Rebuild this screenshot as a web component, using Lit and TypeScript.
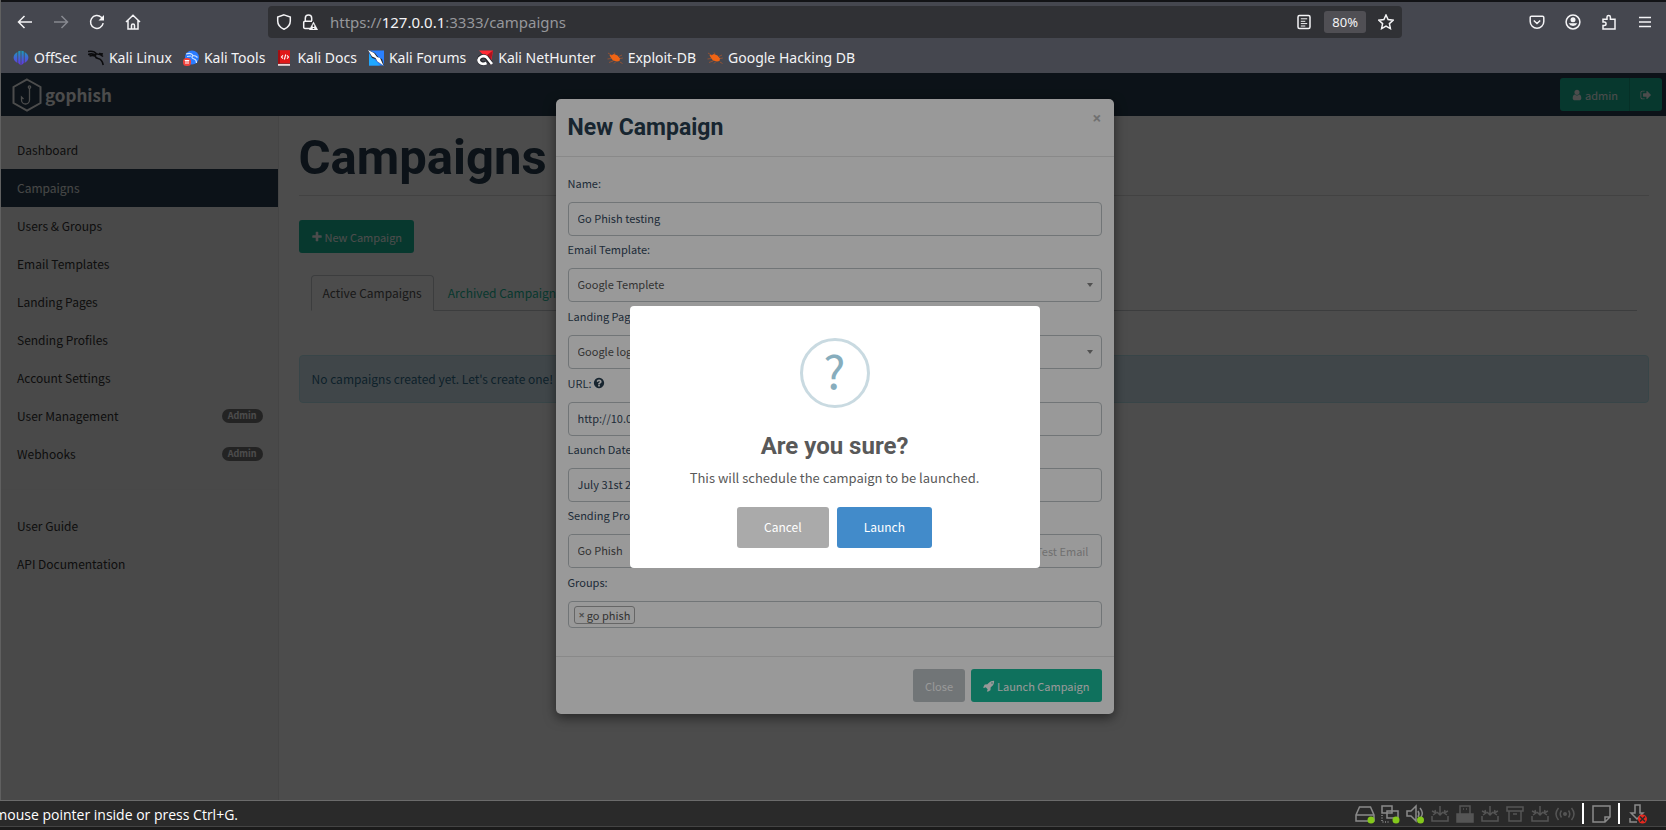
import { LitElement, html, svg, css, TemplateResult } from "lit";
import { customElement, property } from "lit/decorators.js";

const FA: Record<string, string> = {
  plus: "M1600 736v192q0 40-28 68t-68 28h-416v416q0 40-28 68t-68 28h-192q-40 0-68-28t-28-68v-416h-416q-40 0-68-28t-28-68v-192q0-40 28-68t68-28h416v-416q0-40 28-68t68-28h192q40 0 68 28t28 68v416h416q40 0 68 28t28 68z",
  user: "M1536 1399q0 109-62.5 187t-150.5 78h-854q-88 0-150.5-78t-62.5-187q0-85 8.5-160.5t31.5-152 58.5-131 94-89 134.5-34.5q131 128 313 128t313-128q76 0 134.5 34.5t94 89 58.5 131 31.5 152 8.5 160.5zm-256-887q0 159-112.5 271.5t-271.5 112.5-271.5-112.5-112.5-271.5 112.5-271.5 271.5-112.5 271.5 112.5 112.5 271.5z",
  signout: "M704 1440q0 4 1 20t.5 26.5-3 23.5-10 19.5-20.5 6.5h-320q-119 0-203.5-84.5t-84.5-203.5v-704q0-119 84.5-203.5t203.5-84.5h320q13 0 22.5 9.5t9.5 22.5q0 4 1 20t.5 26.5-3 23.5-10 19.5-20.5 6.5h-320q-66 0-113 47t-47 113v704q0 66 47 113t113 47h312l11.5 1 11.5 3 8 5.5 7 9 2 13.5zm928-544q0 26-19 45l-544 544q-19 19-45 19t-45-19-19-45v-288h-448q-26 0-45-19t-19-45v-384q0-26 19-45t45-19h448v-288q0-26 19-45t45-19 45 19l544 544q19 19 19 45z",
  question: "M1024 1376v-192q0-14-9-23t-23-9h-192q-14 0-23 9t-9 23v192q0 14 9 23t23 9h192q14 0 23-9t9-23zm256-672q0-88-55.5-163t-138.5-116-170-41q-243 0-371 213-15 24 8 42l132 100q7 6 19 6 16 0 25-12 53-68 86-92 34-24 86-24 48 0 85.5 26t37.5 59q0 38-20 61t-68 45q-63 28-115.5 86.5t-52.5 125.5v36q0 14 9 23t23 9h192q14 0 23-9t9-23q0-19 21.5-49.5t54.5-49.5q32-18 49-28.5t46-35 44.5-48 28-60.5 12.5-81zm384 192q0 209-103 385.5t-279.5 279.5-385.5 103-385.5-103-279.5-279.5-103-385.5 103-385.5 279.5-279.5 385.5-103 385.5 103 279.5 279.5 103 385.5z",
  rocket: "M1440 448q0-40-28-68t-68-28-68 28-28 68 28 68 68 28 68-28 28-68zm224-288q0 249-75.5 430.5t-253.5 360.5q-81 80-195 176l-20 379q-2 16-16 26l-384 224q-7 4-16 4-12 0-23-9l-64-64q-13-14-8-32l85-276-281-281-276 85q-3 1-9 1-14 0-23-9l-64-64q-17-19-5-39l224-384q10-14 26-16l379-20q96-114 176-195 188-187 358-258t431-71q14 0 24 9.5t10 22.5z",
};

const fa = (name: string) =>
  html`<svg class="fa" viewBox="0 0 1792 1792" aria-hidden="true"><path d=${FA[name]} /></svg>`;

/* Outline icon on a 16-unit grid */
const line = (body: TemplateResult | unknown) =>
  html`<svg class="line" viewBox="0 0 16 16" aria-hidden="true">${body}</svg>`;

const ICONS = {
  back: svg`<path d="M15 8H1.5M7.5 2 1.5 8l6 6"/>`,
  forward: svg`<path d="M1 8h13.500M8.500 2l6 6-6 6"/>`,
  reload: svg`<path d="M14.200 9.200A6.400 6.400 0 1 1 12.300 3.300L14 5"/><path class="solid" d="M15 1v5.500H9.500z"/>`,
  home: svg`<path d="M1 8 8 1.200 15 8M3 6.500V15h10V6.500M6.500 15v-3.500a1.500 1.500 0 0 1 3 0V15"/>`,
  shield: svg`<path d="M8 .9 14.300 3v4c0 4-2.500 6.600-6.300 8.300C4.200 13.600 1.700 11 1.700 7V3z"/>`,
  lock: svg`<path d="M8 14.500H3A1.300 1.300 0 0 1 1.700 13V8.500A1.300 1.300 0 0 1 3 7.200h7M3.300 7V4.200a3.200 3.200 0 0 1 6.400 0V7"/><path class="solid" d="M11.500 7.500 16 16H7z"/><path class="cut" d="M11.500 10.500v2.500M11.500 14v1"/>`,
  reader: svg`<rect x="2" y="1.500" width="12" height="13" rx="1.500"/><path d="M4.800 4.800h6.400M4.800 7.300h4.500M4.800 9.600h6.400M4.800 12h4.500" stroke-width="1"/>`,
  star: svg`<path d="m8 1 2.100 4.600 5 .6-3.700 3.400 1 5L8 12.100l-4.400 2.500 1-5L.9 6.200l5-.6z"/>`,
  pocket: svg`<path d="M2.500 2.200h11A1.300 1.300 0 0 1 14.800 3.500V7.500a6.800 6.800 0 0 1-13.600 0v-4A1.300 1.300 0 0 1 2.500 2.200zM4.800 6.500 8 9.500l3.200-3"/>`,
  account: svg`<circle cx="8" cy="8" r="6.900"/><circle class="solid" cx="8" cy="5.800" r="2.500"/><path class="solid" d="M3.700 9.300h8.600a4.600 4 0 0 1-8.600 0z"/>`,
  puzzle: svg`<path d="M2 15V11.500h1.300a1.600 1.600 0 0 0 0-3.500H2V5.200h4V3.100a1.700 1.700 0 0 1 3.400 0v2.100H14V15z"/>`,
  menu: svg`<path d="M2 3.500h12M2 8h12M2 12.500h12"/>`,
};

interface Bookmark { label: string; icon: TemplateResult; }

const fav = (body: unknown) => html`<svg class="fav" viewBox="0 0 16 16" aria-hidden="true">${body}</svg>`;
const bug = fav(svg`<path fill="#f06414" d="M2.500 5 5 5l2-1 3.500 1.500 2.500 3-.5 2.500-2.500.5-4-1L4 8z"/><path stroke="#b5572a" stroke-width=".7" fill="none" d="M1 3 5 5.500M.5 9l4-.5M2 12.500l4-1.500M7 13.500l2-2M13 12l2.500 1.500M12 6.500l3-1.500M8 4l-1-1.500M13 8.500l2.800-.5"/>`);

const BOOKMARKS: Bookmark[] = [
  { label: "OffSec", icon: fav(svg`<defs><linearGradient id="g" x2="0" y2="16" gradientUnits="userSpaceOnUse"><stop offset="0" stop-color="#16a4b4"/><stop offset=".4" stop-color="#3a6fd0"/><stop offset="1" stop-color="#6a2de8"/></linearGradient></defs><path fill="url(#g)" d="M7.600 .8v14.400L5.200 13V1.300zM8.400 .8v14.400L10.800 13V1.300zM4.400 2v11C1.800 11.500 .6 9.700.6 7.500S1.800 3.500 4.400 2zM11.600 2v11c2.600-1.500 3.800-3.300 3.800-5.500S14.200 3.500 11.600 2z"/>`) },
  { label: "Kali Linux", icon: fav(svg`<path fill="none" stroke="#0b0b0d" stroke-width="1.600" d="M0 1.500c4-.8 7 .2 8.500 2.500 3.500-.3 5 1 6.500 2.500M0 4.500c3-1 6-.5 8 1.200M8.500 3.500c-2 2-1.500 4.500 1.500 5s4.500 2.500 5.200 6.500M1.500 6c2-.8 4-.6 5.500 0M11 3.500l4 .5"/>`) },
  { label: "Kali Tools", icon: fav(svg`<circle cx="9" cy="7.500" r="7" fill="#2a7cff"/><path fill="none" stroke="#cfe4ff" stroke-width="1.200" d="M3 4c4-1.500 6-.5 7 1.500 2 0 3.500.8 4.500 2M10 5.500c-2 1.500-1 3 1 3.500s2.500 2 2.500 4M4 6.500l4-.5"/><rect y="8" width="8" height="8" rx="3.500" fill="#f0423c"/><path stroke="#fff" stroke-width="1" fill="none" d="M1.800 10.500h4.400M3 10.500v3.500M5 10.500v3.500"/>`) },
  { label: "Kali Docs", icon: fav(svg`<path fill="#e01818" d="M2 .2h12v13.300H2z"/><path fill="#a30f12" d="M2 .2h2v13.300H2z"/><path fill="#e9d8d8" d="M2 14h12v1.800H2z"/><path stroke="#fff" stroke-width="1.100" fill="none" d="M7 5.300 5.500 7 7 8.700M11 5.300 12.500 7 11 8.700M9.700 4.500l-1.300 5"/>`) },
  { label: "Kali Forums", icon: fav(svg`<path fill="#2a80ff" d="M1 .5h15v15H1z"/><path fill="#1fa8ff" d="M1 4l11 11.500H1z"/><path fill="#25262c" d="M0 0l7 3 3.500 4.500L14 9l2 6.500-6-3.500-2.500-3L4 8z"/><path fill="#fff" d="m0 0 6 3 3 4 3 1 3.500 7.500-6-4-2-3.500L4 6.500z"/>`) },
  { label: "Kali NetHunter", icon: fav(svg`<path fill="#ff2b35" d="M2 .5h14L14 13z"/><path fill="#b1121e" d="m10 5 6-4.500L13 15z"/><path fill="none" stroke="#25262c" stroke-width="4.500" d="M14 13 9.500 7.500C6 5 2.500 7 2 10c.5 3 4 4.500 7 2.500"/><path fill="none" stroke="#fff" stroke-width="2.600" d="M15 14 9.500 7C6 5 2 7 1.500 10c.5 3.500 4.500 5 8 3"/>`) },
  { label: "Exploit-DB", icon: bug },
  { label: "Google Hacking DB", icon: bug },
];

const st = (body: unknown) => html`<svg class="st" viewBox="0 0 20 20" aria-hidden="true">${body}</svg>`;
const tray = st(svg`<path stroke="#555" d="M2 12v5h16v-5M10 2v9M7 8l3 3 3-3M2 7l4 2M3 11l3-2-1-3M18 7l-4 2M17 11l-3-2 1-3"/>`);
const STATUS = [
  st(svg`<path stroke="#8a8a8a" d="M4.500 3h11L19 11v6H1v-6zM1 11h18"/><circle class="ok" cx="16" cy="16" r="3.500"/>`),
  st(svg`<path stroke="#8a8a8a" d="M2 2h10v7H2zM7 7h11v7H7z"/><path stroke="#8a8a8a" stroke-dasharray="1 1.500" d="M2 11v7h8"/><circle class="ok" cx="16" cy="16" r="3.500"/>`),
  st(svg`<path stroke="#8a8a8a" d="M2 7h4l5-5v15l-5-5H2zM13 7q2 3 0 6M15 4q4 5 1 9"/><circle class="ok" cx="15.500" cy="16" r="3.500"/>`),
  tray,
  st(svg`<path fill="#555" stroke="#555" d="M2 10h16v8H2z"/><path stroke="#555" d="M5 10V2h10v8M8 5h1M11 5h1"/>`),
  tray,
  st(svg`<path stroke="#555" d="M2 3h16v4H2zM4 7v10h12V7M8 10h4"/>`),
  tray,
  st(svg`<circle cx="10" cy="10" r="2" fill="#555"/><path stroke="#555" d="M6.500 6.500q-2.500 3.500 0 7M13.500 6.500q2.500 3.500 0 7M3.500 4q-5 6 0 12M16.500 4q5 6 0 12"/>`),
];

const shared = css`
  * { box-sizing: border-box; }
  button, input, select { font: inherit; margin: 0; }
  a { text-decoration: none; color: inherit; }
  .fa { width: 12px; height: 12px; fill: currentColor; flex: none; }
`;

@customElement("browser-chrome")
export class BrowserChrome extends LitElement {
  static styles = [shared, css`
    :host { display: block; background: #45474f; border-top: 2px solid #121316; font-family: "Noto Sans", sans-serif; color: #f4f4f6; }
    .line { width: 16px; height: 16px; fill: none; stroke: currentColor; stroke-width: 1.5; flex: none; display: block; }
    .solid { fill: currentColor; stroke: none; }
    .cut { stroke: #303135; }
    .toolbar { display: flex; align-items: center; height: 40px; }
    .side { flex: 0 0 267px; display: flex; align-items: center; gap: 20px; padding-left: 16px; }
    .side.end { flex-basis: 264px; justify-content: flex-end; padding: 0 13px 0 0; }
    button { background: none; border: 0; padding: 0; color: inherit; }
    .dim { color: #878990; }
    .address { flex: 1; display: flex; align-items: center; height: 32px; border-radius: 4px; background: #303135; padding: 0 8px; gap: 10px; }
    .url { flex: 1; font-size: 15px; line-height: 20px; color: #96979b; padding-left: 2px; }
    .url b { font-weight: 400; color: #f4f4f6; }
    .zoom { background: #504f54; border-radius: 3px; font-size: 13px; line-height: 22px; padding: 0 8px; margin: 0 2px; }
    .bookmarks { display: flex; height: 31px; padding: 0 12px; gap: 11px; }
    .bookmarks a { display: flex; align-items: center; gap: 5px; font-size: 14px; line-height: 20px; }
    .fav { width: 16px; height: 16px; flex: none; }
  `];

  render() {
    return html`
      <div class="toolbar">
        <div class="side">
          <button aria-label="Back">${line(ICONS.back)}</button>
          <button class="dim" aria-label="Forward">${line(ICONS.forward)}</button>
          <button aria-label="Reload">${line(ICONS.reload)}</button>
          <button aria-label="Home">${line(ICONS.home)}</button>
        </div>
        <div class="address">
          ${line(ICONS.shield)}${line(ICONS.lock)}
          <span class="url">https://<b>127.0.0.1</b>:3333/campaigns</span>
          <button aria-label="Reader view">${line(ICONS.reader)}</button>
          <button class="zoom">80%</button>
          <button aria-label="Bookmark">${line(ICONS.star)}</button>
        </div>
        <div class="side end">
          <button aria-label="Pocket">${line(ICONS.pocket)}</button>
          <button aria-label="Account">${line(ICONS.account)}</button>
          <button aria-label="Extensions">${line(ICONS.puzzle)}</button>
          <button aria-label="Menu">${line(ICONS.menu)}</button>
        </div>
      </div>
      <nav class="bookmarks">
        ${BOOKMARKS.map((b) => html`<a href="#">${b.icon}<span>${b.label}</span></a>`)}
      </nav>`;
  }
}

@customElement("campaign-form")
export class CampaignForm extends LitElement {
  static styles = [shared, css`
    :host { display: block; width: 558px; margin-top: 26px; background: #fff; border-radius: 5px; box-shadow: 0 4px 12px rgba(0, 0, 0, .5); color: #34495e; font-size: 11px; line-height: 16px; }
    header { display: flex; justify-content: space-between; align-items: flex-start; padding: 12px; height: 58px; border-bottom: 1px solid #e5e5e5; }
    h4 { margin: 0; font: 700 23px/34px Roboto, sans-serif; color: #283f50; }
    .x { border: 0; background: none; padding: 0; font: 700 16px/14px "Noto Sans", sans-serif; color: #bbb; }
    .body { padding: 18px 12px 28px; }
    .row { margin-bottom: 5px; }
    .row.pick { margin-bottom: 6px; }
    .cols { display: grid; grid-template-columns: 1fr 1fr; column-gap: 12px; }
    label { display: flex; align-items: center; gap: 2px; height: 16px; margin-bottom: 11px; }
    label .fa { color: #283f50; }
    input, select { display: block; width: 100%; height: 34px; border: 1px solid #bdc3c7; border-radius: 4px; background: #fff; color: #34495e; padding: 0 9px 2px; }
    select { appearance: none; color: #555; }
    .select { display: grid; align-items: center; }
    .select > * { grid-area: 1 / 1; }
    .caret { justify-self: end; margin-right: 9px; border: 3px solid transparent; border-top: 4px solid #888; border-bottom: 0; pointer-events: none; }
    .group { display: flex; border: 1px solid #bdc3c7; border-radius: 4px; height: 34px; }
    .group select { border: 0; height: 32px; }
    .group button { border: 0; border-left: 1px solid #bdc3c7; background: none; color: #bbb; padding: 0 12px; white-space: nowrap; border-radius: 0; }
    .tags { display: flex; align-items: center; height: 27px; border: 1px solid #bdc3c7; border-radius: 4px; padding: 0 5px; }
    .tag { display: flex; align-items: center; gap: 2px; height: 18px; border: 1px solid #aaa; border-radius: 3px; padding: 0 4px; color: #555; }
    .tag button { border: 0; background: none; padding: 0; font: 700 11px/16px "Noto Sans", sans-serif; color: #888; }
    .tags input { flex: 1; min-width: 0; border: 0; height: 20px; background: none; }
    footer { display: flex; justify-content: flex-end; gap: 6px; padding: 12px; border-top: 1px solid #e5e5e5; }
    footer button { display: flex; align-items: center; gap: 2px; height: 33px; border: 0; border-radius: 3px; padding: 0 12px; color: #fff; background: #bdc3c7; }
    footer .go { background: #1abc9c; }
  `];

  private select(id: string, value: string) {
    return html`<div class="select"><select id=${id}><option>${value}</option></select><i class="caret"></i></div>`;
  }

  render() {
    return html`
      <header><h4>New Campaign</h4><button class="x" aria-label="Close dialog">×</button></header>
      <div class="body">
        <div class="row"><label for="name">Name:</label><input id="name" .value=${"Go Phish testing"} /></div>
        <div class="row pick"><label for="template">Email Template:</label>${this.select("template", "Google Templete")}</div>
        <div class="row pick"><label for="page">Landing Page:</label>${this.select("page", "Google login")}</div>
        <div class="row"><label for="url">URL: ${fa("question")}</label><input id="url" .value=${"http://10.0.2.15"} /></div>
        <div class="row cols">
          <div><label for="launch">Launch Date</label><input id="launch" .value=${"July 31st 2025"} /></div>
          <div><label for="by">Send Emails By</label><input id="by" /></div>
        </div>
        <div class="row pick"><label for="profile">Sending Profile:</label>
          <div class="group"><select id="profile"><option>Go Phish</option></select><button disabled>Send Test Email</button></div></div>
        <label for="groups">Groups:</label>
        <div class="tags"><span class="tag"><button aria-label="Remove go phish">×</button>go phish</span><input id="groups" /></div>
      </div>
      <footer><button>Close</button><button class="go">${fa("rocket")} Launch Campaign</button></footer>`;
  }
}

@customElement("confirm-box")
export class ConfirmBox extends LitElement {
  static styles = [shared, css`
    :host { display: flex; flex-direction: column; align-items: center; width: 410px; padding: 32px 16px 20px; background: #fff; border-radius: 4px; color: #595959; }
    .mark { display: flex; align-items: flex-start; justify-content: center; width: 70px; height: 70px; border: 3px solid #c9dae1; border-radius: 50%; color: #87adbd; font-size: 46px; line-height: 56px; }
    h2 { margin: 21px 0 0; font: 700 24px/34px Roboto, sans-serif; }
    p { margin: 5px 0 0; font-size: 13px; line-height: 20px; }
    .actions { display: flex; gap: 8px; margin-top: 19px; }
    button { height: 41px; border: 0; border-radius: 3px; padding: 0 27px; font-size: 12px; line-height: 20px; color: #fff; background: #aaa; }
    button.go { background: #428bca; }
  `];
  render() {
    return html`<div class="mark">?</div><h2>Are you sure?</h2>
      <p>This will schedule the campaign to be launched.</p>
      <div class="actions"><button>Cancel</button><button class="go">Launch</button></div>`;
  }
}

@customElement("status-bar")
export class StatusBar extends LitElement {
  static styles = css`
    :host { display: flex; justify-content: space-between; height: 30px; background: #2a2a2a; border-top: 1px solid #6b6b6b; border-bottom: 3px solid #1b1b1b; font: 14px/27px "Open Sans", sans-serif; color: #fff; }
    .hint { display: flex; justify-content: flex-end; width: 238px; overflow: hidden; white-space: nowrap; border-bottom: 1px solid #444; }
    .tray { display: flex; align-items: center; gap: 5px; padding-right: 19px; border-bottom: 1px solid #444; flex: 1; justify-content: flex-end; }
    .st { width: 20px; height: 20px; fill: none; stroke-width: 1.5; display: block; }
    .ok { fill: #84c81c; stroke: none; }
    .bar { width: 2px; height: 21px; background: #fff; margin: 0 2px; }
  `;
  render() {
    return html`<div class="hint">mouse pointer inside or press Ctrl+G.</div>
      <div class="tray">${STATUS}<i class="bar"></i>
        ${st(svg`<path stroke="#8a8a8a" d="M2 2h17v11l-5 5H2zM19 13h-5v5"/>`)}<i class="bar"></i>
        ${st(svg`<path stroke="#8a8a8a" d="M3 14v4h7M8 1h5v8h3l-6 6-6-6h4z"/><circle cx="15.500" cy="15" r="4.500" fill="#e8281e"/><path stroke="#2a2a2a" d="m13 12.500 5 5M18 12.500l-5 5"/>`)}
      </div>`;
  }
}

@customElement("app-root")
export class AppRoot extends LitElement {
  static styles = [shared, css`
    :host { display: flex; flex-direction: column; height: 100vh; overflow: hidden; }
    .window { flex: 1; min-height: 0; display: flex; flex-direction: column; border-left: 1px solid #606060; background: #45474f; }
    .page { position: relative; flex: 1; min-height: 0; display: flex; flex-direction: column; background: #fff; font: 12px/18px "Noto Sans CJK JP", sans-serif; color: #34495e; overflow: hidden; }
    .navbar { display: flex; align-items: center; justify-content: space-between; height: 43px; background: #283f50; color: #fff; padding: 0 4px 0 11px; }
    .brand { display: flex; align-items: center; gap: 3px; font-weight: 700; font-size: 17px; line-height: 24px; }
    .hex { width: 30px; height: 34px; fill: none; stroke: #fff; stroke-width: 2; }
    .hex .hook { stroke-width: 1.3; }
    .account { display: flex; }
    .account button { display: flex; align-items: center; gap: 2px; height: 33px; border: 0; background: #1abc9c; color: #fff; padding: 0 11px; font-size: 11px; }
    .account button:first-child { border-radius: 3px 0 0 3px; border-right: 1px solid #16a085; }
    .account button:last-child { border-radius: 0 3px 3px 0; padding: 0 10px; }
    .columns { flex: 1; display: grid; grid-template-columns: 1fr 5fr; }
    .sidebar { background: #f5f5f5; border-right: 1px solid #e7e7e7; padding-top: 15px; }
    .sidebar a { display: flex; align-items: center; justify-content: space-between; height: 38px; padding: 0 15px 0 16px; color: #333; }
    .sidebar a.active { background: #283f50; color: #eee; }
    .badge { background: #777; color: #fff; border-radius: 7px; font-size: 9px; font-weight: 700; line-height: 14px; padding: 0 6px; }
    .rule { height: 1px; background: #f0f0f0; margin: 16px 0 17px; }
    .main { padding: 10px 17px 0 20px; }
    h1 { margin: 0 0 24px; padding-bottom: 6px; border-bottom: 1px solid #dedede; font: 700 49px/63px Roboto, sans-serif; color: #283f50; }
    .new { display: flex; align-items: center; gap: 2px; height: 33px; border: 0; border-radius: 3px; background: #1abc9c; color: #fff; padding: 0 12px; font-size: 11px; }
    .tabs { display: flex; margin: 22px 12px 44px; border-bottom: 1px solid #c8cdd0; gap: 2px; }
    .tabs a { height: 35px; line-height: 34px; padding: 0 11px; color: #1abc9c; border: 1px solid transparent; }
    .tabs a.on { color: #555; background: #fff; border-color: #c8cdd0; border-bottom-color: #fff; border-radius: 4px 4px 0 0; margin-bottom: -1px; height: 36px; }
    .alert { border: 1px solid #bce8f1; border-radius: 4px; background: #d9edf7; color: #31708f; padding: 14px 12px; }
    .shade { position: absolute; inset: 0; display: flex; justify-content: center; align-items: flex-start; padding-left: 2px; background: rgba(0, 0, 0, .5); }
    .shade.top { align-items: center; background: rgba(0, 0, 0, .4); }
  `];

  @property({ type: Array }) items = ["Dashboard", "Campaigns", "Users & Groups", "Email Templates", "Landing Pages", "Sending Profiles", "Account Settings", "User Management", "Webhooks"];

  render() {
    return html`
      <div class="window">
        <browser-chrome></browser-chrome>
        <div class="page">
          <div class="navbar">
            <a class="brand" href="#">
              <svg class="hex" viewBox="0 0 30 34" aria-hidden="true"><path d="M15 1.500 28.500 9v16L15 32.500 1.500 25V9z"/><path class="hook" d="M17.500 10v12a4 4 0 0 1-8 0v-3l2 2"/><circle class="hook" cx="17.500" cy="9" r="1.200"/></svg>
              gophish</a>
            <div class="account"><button>${fa("user")} admin</button><button aria-label="Sign out">${fa("signout")}</button></div>
          </div>
          <div class="columns">
            <nav class="sidebar">
              ${this.items.map((t, i) => html`<a href="#" class=${t === "Campaigns" ? "active" : ""}>${t}${i > 6 ? html`<span class="badge">Admin</span>` : ""}</a>`)}
              <div class="rule"></div>
              <a href="#">User Guide</a><a href="#">API Documentation</a>
            </nav>
            <main class="main">
              <h1>Campaigns</h1>
              <button class="new">${fa("plus")} New Campaign</button>
              <div class="tabs"><a class="on" href="#">Active Campaigns</a><a href="#">Archived Campaigns</a></div>
              <div class="alert">No campaigns created yet. Let's create one!</div>
            </main>
          </div>
          <div class="shade"><campaign-form></campaign-form></div>
          <div class="shade top"><confirm-box></confirm-box></div>
        </div>
      </div>
      <status-bar></status-bar>`;
  }
}
